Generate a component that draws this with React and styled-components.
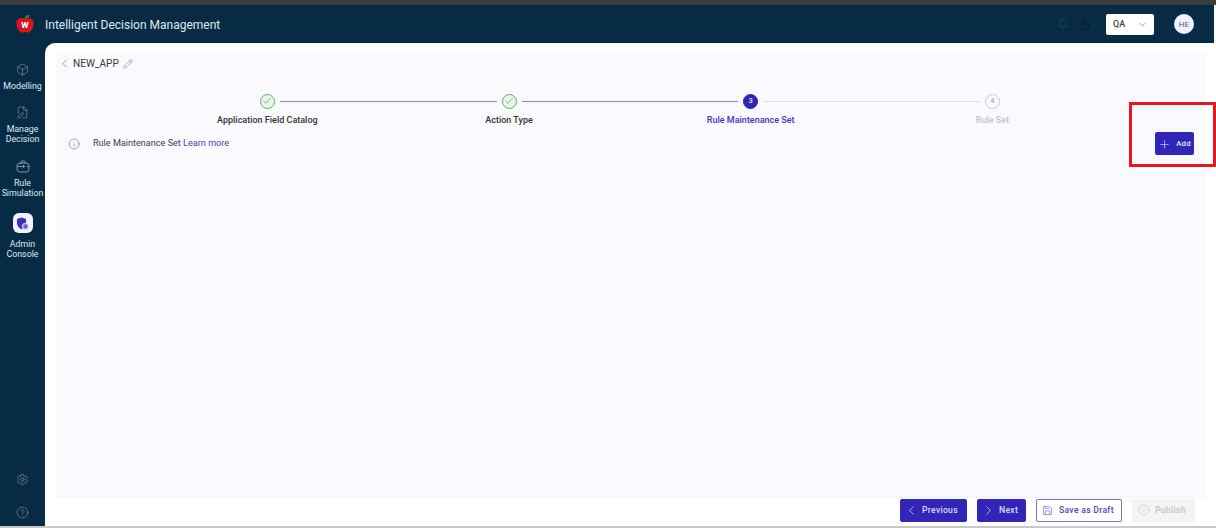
import React from "react";
import styled, { createGlobalStyle } from "styled-components";
import { Box, FilePen, ChevronLeft, ChevronRight, ChevronDown, Pencil, Info, Check, Plus, Save, Bell, Moon, Settings, CircleHelp, CircleCheck } from "lucide-react";

const Global = createGlobalStyle`
  html, body { margin: 0; padding: 0; background: #fff; }
  body { font-family: Roboto, "Liberation Sans", sans-serif; }
  * { box-sizing: border-box; }
`;

const Page = styled.div`
  position: relative;
  width: 1216px;
  height: 528px;
  display: flex;
  flex-direction: column;
  overflow: hidden;
  background: #fff;
`;
const TopStrip = styled.div`
  height: 5px;
  background: #3d3d3d;
  flex: none;
`;
const Frame = styled.div`
  flex: 1;
  min-height: 0;
  display: flex;
  flex-direction: column;
  margin-right: 2px;
  margin-bottom: 2px;
  background: #082b45;
`;
const Header = styled.header`
  height: 38px;
  flex: none;
  display: flex;
  align-items: center;
  padding: 0 20px 0 16px;
  color: #dfe9f1;
`;
const Logo = styled.svg`
  width: 18px;
  height: 20px;
  flex: none;
`;
const Title = styled.div`
  margin-left: 11px;
  font-size: 12px;
  flex: 1;
  padding-top: 1px;
`;
const HeaderIcon = styled.span`
  display: flex;
  color: ${(p) => p.$color};
  margin-right: ${(p) => p.$gap}px;
`;
const EnvSelect = styled.div`
  width: 48px;
  height: 21px;
  background: #fff;
  border-radius: 2px;
  display: flex;
  align-items: center;
  justify-content: space-between;
  padding: 0 6px 0 7px;
  color: #444;
  font-size: 9px;
  font-weight: 500;
  margin-right: 20px;
`;
const Avatar = styled.div`
  width: 20px;
  height: 20px;
  border-radius: 50%;
  background: #f1f1fb;
  color: #5a50cc;
  display: flex;
  align-items: center;
  justify-content: center;
  font-size: 8px;
  font-weight: 400;
`;
const Body = styled.div`
  flex: 1;
  min-height: 0;
  display: flex;
`;
const Sidebar = styled.nav`
  width: 45px;
  flex: none;
  display: flex;
  flex-direction: column;
  align-items: center;
  padding-top: 20px;
`;
const NavItem = styled.div`
  display: flex;
  flex-direction: column;
  align-items: center;
  gap: ${(p) => p.$gap}px;
  margin-bottom: ${(p) => p.$mb ?? 0}px;
  color: #dbe8f2;
  font-size: 8.8px;
  line-height: 10px;
  text-align: center;
  font-weight: 400;
  svg { color: #7f95a6; flex: none; }
`;
const AdminTile = styled.div`
  width: 20px;
  height: 20px;
  border-radius: 6px;
  background: #f3f2fd;
  display: flex;
  align-items: center;
  justify-content: center;
`;
const SideFoot = styled.div`
  margin-top: auto;
  display: flex;
  flex-direction: column;
  align-items: center;
  gap: 20px;
  padding-bottom: 7px;
  color: #7f95a6;
`;
const Main = styled.main`
  flex: 1;
  min-width: 0;
  background: #fff;
  border-top-left-radius: 10px;
  padding: 10px 9px 4px 11px;
  display: flex;
  flex-direction: column;
`;
const Content = styled.div`
  flex: 1;
  min-height: 0;
  background: #f9f9fe;
  display: flex;
  flex-direction: column;
`;
const Crumb = styled.div`
  display: flex;
  align-items: center;
  height: 21px;
  padding-left: 2px;
  color: #3a3a3a;
  font-size: 10.1px;
  svg { color: #777; flex: none; }
`;
const CrumbText = styled.span`
  margin: 0 4px 0 2px;
`;
const Stepper = styled.div`
  display: flex;
  margin: 19px 0 0 90.5px;
`;
const Step = styled.div`
  width: 241.7px;
  display: flex;
  flex-direction: column;
  align-items: center;
  gap: 6px;
`;
const Track = styled.div`
  width: 100%;
  height: 16px;
  display: flex;
  align-items: center;
`;
const Line = styled.div`
  flex: 1;
  height: 1px;
  background: ${(p) => (p.$hidden ? "transparent" : p.$done ? "#8c85dc" : "#dfdfe6")};
  margin: ${(p) => (p.$side === "left" ? "1px 5px 0 0" : "1px 0 0 5px")};
`;
const DoneDot = styled.div`
  width: 15px;
  height: 15px;
  border-radius: 50%;
  border: 1px solid #5fae62;
  background: #eaf5ea;
  color: #4f9c54;
  display: flex;
  align-items: center;
  justify-content: center;
  flex: none;
`;
const NumDot = styled.div`
  width: 15px;
  height: 15px;
  border-radius: 50%;
  flex: none;
  display: flex;
  align-items: center;
  justify-content: center;
  font-size: 7px;
  font-weight: 500;
  background: ${(p) => (p.$active ? "#2f24b4" : "transparent")};
  color: ${(p) => (p.$active ? "#e6e5fa" : "#a8a8ae")};
  border: 1px solid ${(p) => (p.$active ? "#2f24b4" : "#c9c9cf")};
`;
const StepLabel = styled.div`
  font-size: 9px;
  line-height: 11px;
  font-weight: 500;
  white-space: nowrap;
  color: ${(p) => p.$color};
`;
const InfoRow = styled.div`
  display: flex;
  align-items: flex-start;
  margin-top: 11px;
  padding: 0 11px 0 12px;
  color: #3f3f3f;
  font-size: 9.1px;
  svg { flex: none; margin-top: 1px; }
`;
const InfoText = styled.div`
  margin-left: 13px;
  flex: 1;
  line-height: 12px;
`;
const LearnMore = styled.a`
  color: #4a3fc4;
`;
const AddButton = styled.button`
  width: 39px;
  height: 23px;
  border: 0;
  border-radius: 2px;
  background: #3226b8;
  color: #e9e8fb;
  display: flex;
  align-items: center;
  justify-content: center;
  gap: 5px;
  padding: 0;
  font: 500 7.8px Roboto, sans-serif;
  letter-spacing: 0.2px;
  margin-top: -5px;
`;
const FootBar = styled.div`
  flex: none;
  height: 24px;
  margin: 0 10px 0 0;
  background: #fff;
  display: flex;
  align-items: center;
  justify-content: flex-end;
  gap: 10px;
  box-shadow: 0 -1px 2px rgba(40, 40, 90, 0.03);
`;
const FootBtn = styled.button`
  height: 23px;
  width: ${(p) => p.$w}px;
  border-radius: 2px;
  display: flex;
  align-items: center;
  gap: ${(p) => p.$gap}px;
  padding: 0 0 0 ${(p) => p.$pad}px;
  font: 500 8.6px Roboto, sans-serif;
  letter-spacing: 0.3px;
  border: 1px solid ${(p) => (p.$variant === "solid" ? "#3226b8" : p.$variant === "outline" ? "#7a72d4" : "#f4f4f4")};
  background: ${(p) => (p.$variant === "solid" ? "#3226b8" : p.$variant === "outline" ? "#fff" : "#f4f4f4")};
  color: ${(p) => (p.$variant === "solid" ? "#dcdbf7" : p.$variant === "outline" ? "#4d43c4" : "#c3c3c3")};
`;
const Annotation = styled.div`
  position: absolute;
  left: 1129px;
  top: 102px;
  width: 87px;
  height: 65px;
  border: 3.5px solid #e8171f;
  pointer-events: none;
`;
const BottomRule = styled.div`
  position: absolute;
  left: 0;
  right: 0;
  bottom: 0;
  height: 2px;
  background: #c9c9c9;
`;

const Apple = () => (
  <Logo viewBox="0 0 18 20">
    <path d="M9 4.800C11 3.500 15 3.400 16.800 6.200c1.700 3 .8 7.500-1.600 10.400-1.300 1.600-3 2.400-4.200 1.900-1.300-.4-2.700-.4-4 0-1.200.5-2.900-.3-4.200-1.900C.4 13.700-.5 9.200 1.200 6.200 3 3.400 7 3.500 9 4.800z" fill="#d8141c" />
    <path d="M8.500 4.500C8.800 2.600 10.600.9 14 1c-1 2.200-2.800 3.400-5.500 3.500z" fill="#3f8a36" />
    <text x="9" y="14.300" textAnchor="middle" fontSize="10" fontWeight="700" fontFamily="Roboto, sans-serif" fill="#fff">w</text>
  </Logo>
);

const AdminIcon = () => (
  <svg width="15" height="15" viewBox="0 0 15 15">
    <path d="M6.500 1.500l4.500 1.600v4c0 3-2 5-4.500 6.200C4 12.100 2 10.100 2 7.100v-4z" fill="#3a2fb8" />
    <circle cx="10.400" cy="10.400" r="3.200" fill="#8d86d8" stroke="#f3f2fd" strokeWidth=".8" />
    <circle cx="10.400" cy="10.400" r="1" fill="#3a2fb8" />
  </svg>
);

const SimIcon = () => (
  <svg width="14" height="13" viewBox="0 0 14 13" fill="none" stroke="currentColor" strokeWidth="1" strokeLinecap="round" strokeLinejoin="round">
    <path d="M5 3V2a1 1 0 0 1 1-1h2a1 1 0 0 1 1 1v1" />
    <rect x="1" y="3" width="12" height="9" rx="3" />
    <path d="M1.500 6.500h7M7 5l1.500 1.500L7 8M11 6.500h1.500" />
  </svg>
);

const Done = () => (
  <DoneDot>
    <Check size={10} strokeWidth={1.6} />
  </DoneDot>
);

const steps = [
  { label: "Application Field Catalog", state: "done", color: "#333" },
  { label: "Action Type", state: "done", color: "#333" },
  { label: "Rule Maintenance Set", state: "active", n: 3, color: "#3f34bd" },
  { label: "Rule Set", state: "todo", n: 4, color: "#c4c4c9" },
];

export default function App() {
  return (
    <Page>
      <Global />
      <TopStrip />
      <Frame>
        <Header>
          <Apple />
          <Title>Intelligent Decision Management</Title>
          <HeaderIcon $color="#22445c" $gap={9}><Bell size={12} strokeWidth={1.5} /></HeaderIcon>
          <HeaderIcon $color="#031c2e" $gap={15}><Moon size={13} strokeWidth={1.5} /></HeaderIcon>
          <EnvSelect>QA <ChevronDown size={11} strokeWidth={1.4} color="#666" /></EnvSelect>
          <Avatar>HE</Avatar>
        </Header>
        <Body>
          <Sidebar>
            <NavItem $mb={15} $gap={5}><Box size={13} strokeWidth={1.2} />Modelling</NavItem>
            <NavItem $mb={16} $gap={5}><FilePen size={13} strokeWidth={1.2} /><span>Manage<br />Decision</span></NavItem>
            <NavItem $mb={15} $gap={5}><SimIcon /><span>Rule<br />Simulation</span></NavItem>
            <NavItem $gap={6}><AdminTile><AdminIcon /></AdminTile><span>Admin<br />Console</span></NavItem>
            <SideFoot>
              <Settings size={13} strokeWidth={1.2} />
              <CircleHelp size={13} strokeWidth={1.2} />
            </SideFoot>
          </Sidebar>
          <Main>
            <Content>
              <Crumb>
                <ChevronLeft size={13} strokeWidth={1.3} />
                <CrumbText>NEW_APP</CrumbText>
                <Pencil size={10} strokeWidth={1.3} />
              </Crumb>
              <Stepper>
                {steps.map((s, i) => (
                  <Step key={s.label}>
                    <Track>
                      <Line $side="left" $hidden={i === 0} $done={i <= 2} />
                      {s.state === "done" ? <Done /> : <NumDot $active={s.state === "active"}>{s.n}</NumDot>}
                      <Line $side="right" $hidden={i === 3} $done={i < 2} />
                    </Track>
                    <StepLabel $color={s.color}>{s.label}</StepLabel>
                  </Step>
                ))}
              </Stepper>
              <InfoRow>
                <Info size={12} strokeWidth={1.1} color="#666" />
                <InfoText>Rule Maintenance Set <LearnMore>Learn more</LearnMore></InfoText>
                <AddButton><Plus size={13} strokeWidth={1.1} />Add</AddButton>
              </InfoRow>
            </Content>
            <FootBar>
              <FootBtn $w={67} $pad={3} $gap={3} $variant="solid"><ChevronLeft size={15} strokeWidth={1.2} />Previous</FootBtn>
              <FootBtn $w={49} $pad={3} $gap={3} $variant="solid"><ChevronRight size={15} strokeWidth={1.2} />Next</FootBtn>
              <FootBtn $w={86} $pad={5} $gap={6} $variant="outline"><Save size={11} strokeWidth={1.2} />Save as Draft</FootBtn>
              <FootBtn $w={63} $pad={5} $gap={5} $variant="muted"><CircleCheck size={12} strokeWidth={1.1} />Publish</FootBtn>
            </FootBar>
          </Main>
        </Body>
      </Frame>
      <Annotation />
      <BottomRule />
    </Page>
  );
}
